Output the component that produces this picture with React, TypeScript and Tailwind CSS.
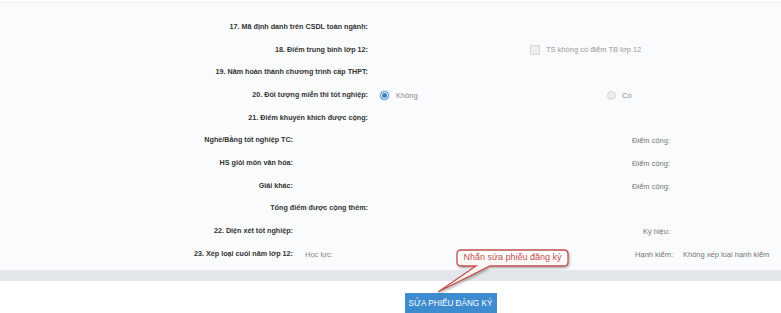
import React from 'react';

const font = { fontFamily: '"Liberation Sans", Arial, sans-serif' };

const Label = ({ w, children }: { w: string; children: React.ReactNode }) => (
  <div className={`${w} shrink-0 text-right font-bold text-[#333] text-[7.2px]`}>{children}</div>
);

const Radio = ({ checked }: { checked?: boolean }) =>
  checked ? (
    <span className="w-[9px] h-[9px] rounded-full border border-[#4a8fd0] bg-white flex items-center justify-center shadow-[0_0_2px_#7fb2e5]">
      <span className="w-[5px] h-[5px] rounded-full bg-[#3a7fc4]" />
    </span>
  ) : (
    <span className="w-[9px] h-[9px] rounded-full border border-[#d4d4d4] bg-[#ececec]" />
  );

const Row = ({ children }: { children: React.ReactNode }) => (
  <div className="flex items-center h-[22.7px]">{children}</div>
);

export default function App() {
  return (
    <div className="w-[781px] h-[313px] bg-white overflow-hidden relative text-[7.5px]" style={font}>
      {/* form panel */}
      <div className="bg-[#fafbfc] border-t border-[#eeeeee] mt-[2px] pt-[13px] h-[268px]">
        <Row>
          <Label w="w-[368px]">17. Mã định danh trên CSDL toàn ngành:</Label>
        </Row>
        <Row>
          <Label w="w-[368px]">18. Điểm trung bình lớp 12:</Label>
          <div className="ml-[162px] flex items-center gap-[6px] text-[#9a9a9a]">
            <span className="w-[10px] h-[10px] border border-[#d6d6d6] bg-[#eeeeee] rounded-[1px]" />
            <span>TS không có điểm TB lớp 12</span>
          </div>
        </Row>
        <Row>
          <Label w="w-[368px]">19. Năm hoàn thành chương trình cấp THPT:</Label>
        </Row>
        <Row>
          <Label w="w-[368px]">20. Đối tượng miễn thi tốt nghiệp:</Label>
          <div className="ml-[12px] w-[227px] flex items-center gap-[7px] text-[#8a8a8a]">
            <Radio checked />
            <span>Không</span>
          </div>
          <div className="flex items-center gap-[6px] text-[#8a8a8a]">
            <Radio />
            <span>Có</span>
          </div>
        </Row>
        <Row>
          <Label w="w-[368px]">21. Điểm khuyến khích được cộng:</Label>
        </Row>
        <Row>
          <Label w="w-[293px]">Nghề/Bằng tốt nghiệp TC:</Label>
          <div className="w-[377px] text-right text-[#777]">Điểm cộng:</div>
        </Row>
        <Row>
          <Label w="w-[293px]">HS giỏi môn văn hóa:</Label>
          <div className="w-[377px] text-right text-[#777]">Điểm cộng:</div>
        </Row>
        <Row>
          <Label w="w-[293px]">Giải khác:</Label>
          <div className="w-[377px] text-right text-[#777]">Điểm cộng:</div>
        </Row>
        <Row>
          <Label w="w-[368px]">Tổng điểm được cộng thêm:</Label>
        </Row>
        <Row>
          <Label w="w-[293px]">22. Diện xét tốt nghiệp:</Label>
          <div className="w-[377px] text-right text-[#777]">Ký hiệu:</div>
        </Row>
        <Row>
          <Label w="w-[293px]">23. Xếp loại cuối năm lớp 12:</Label>
          <div className="ml-[12px] w-[290px] text-[#888]">Học lực:</div>
          <div className="w-[78px] text-right text-[#777]">Hạnh kiểm:</div>
          <div className="ml-[10px] text-[#777]">Không xếp loại hạnh kiểm</div>
        </Row>
      </div>

      {/* divider band */}
      <div className="h-[11px] bg-[#e3e6ea]" />

      {/* actions */}
      <div className="flex justify-center pt-[12px] pl-[120px]">
        <button className="bg-[#3d8ccf] text-white text-[8.2px] h-[22px] w-[92px] uppercase whitespace-nowrap">
          SỬA PHIẾU ĐĂNG KÝ
        </button>
      </div>

      {/* callout */}
      <div className="absolute left-[430px] top-[246px] w-[150px] h-[50px]">
        <svg width="150" height="50" viewBox="0 0 150 50" className="absolute inset-0">
          <defs>
            <linearGradient id="cg" x1="0" y1="0" x2="0" y2="1">
              <stop offset="0" stopColor="#ffffff" />
              <stop offset="1" stopColor="#f6e7e6" />
            </linearGradient>
            <filter id="sh" x="-10%" y="-10%" width="130%" height="140%">
              <feDropShadow dx="1" dy="1.5" stdDeviation="1.2" floodColor="#000" floodOpacity="0.3" />
            </filter>
          </defs>
          <path
            d="M31 4 H134 Q138 4 138 8 V16 Q138 20 134 20 H60 L8 46 L46 20 H31 Q27 20 27 16 V8 Q27 4 31 4 Z"
            fill="url(#cg)"
            stroke="#c0504d"
            strokeWidth="1.3"
            filter="url(#sh)"
          />
        </svg>
        <div className="absolute left-[27px] top-[4px] w-[111px] h-[16px] flex items-center justify-center text-[#c0504d] text-[9px] whitespace-nowrap">
          Nhấn sửa phiếu đăng ký
        </div>
      </div>
    </div>
  );
}
